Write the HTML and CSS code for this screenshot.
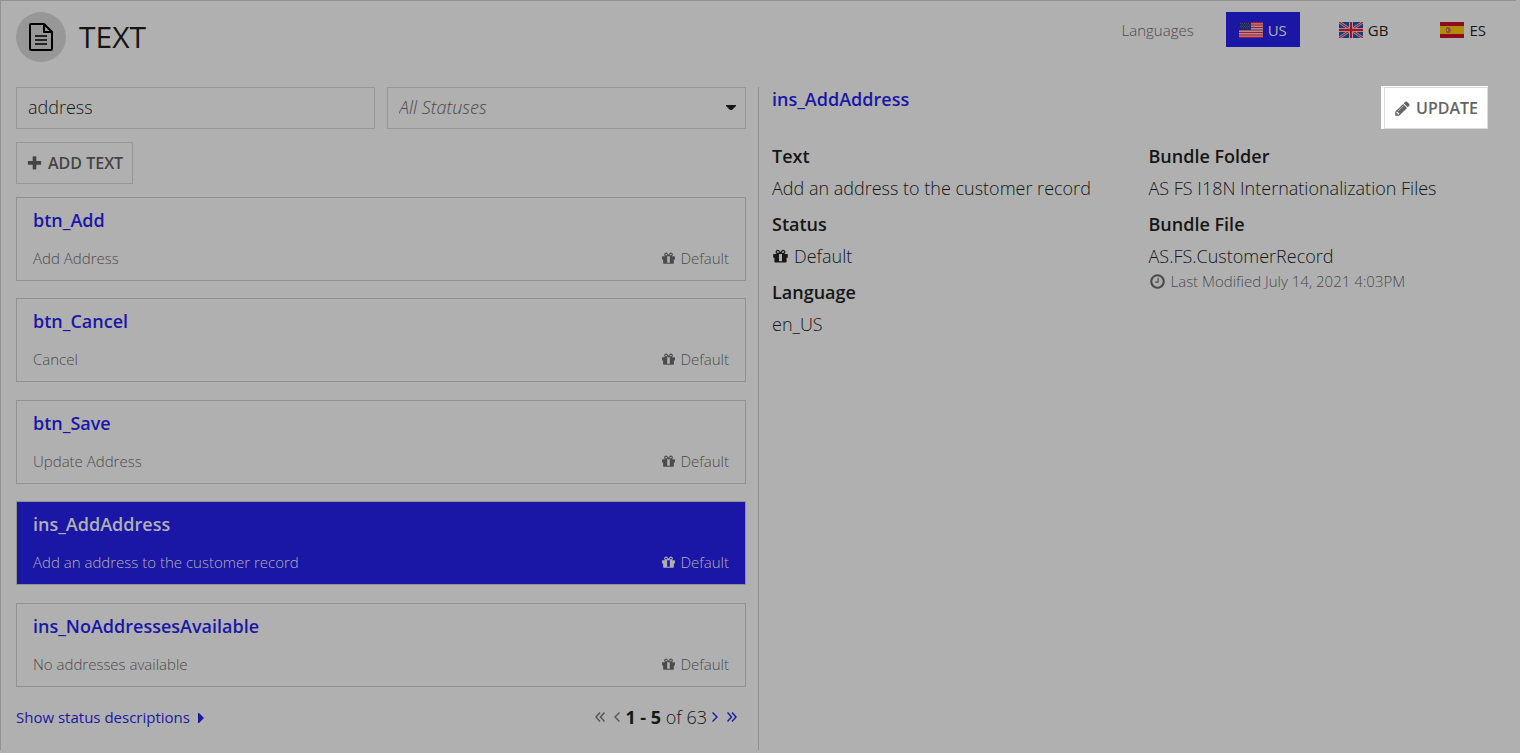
FILE: index.html
```html
<!DOCTYPE html>
<html lang="en">
<head>
<meta charset="utf-8">
<title>Text</title>
<link rel="stylesheet" href="styles.css">
</head>
<body>
<svg class="sprite" aria-hidden="true">
  <symbol id="gift" viewBox="0 0 1792 1792"><path d="M1056 1356v-716h-320v716q0 25 18 38.500t46 13.500h192q28 0 46-13.500t18-38.500zm-456-844h195l-126-161q-26-31-69-31-40 0-68 28t-28 68 28 68 68 28zm688-96q0-40-28-68t-68-28q-43 0-69 31l-125 161h194q40 0 68-28t28-68zm376 256v320q0 14-9 23t-23 9h-96v416q0 40-28 68t-68 28h-1088q-40 0-68-28t-28-68v-416h-96q-14 0-23-9t-9-23v-320q0-14 9-23t23-9h440q-93 0-158.500-65.500t-65.500-158.500 65.500-158.500 158.500-65.500q107 0 168 77l128 165 128-165q61-77 168-77 93 0 158.500 65.500t65.500 158.500-65.500 158.500-158.500 65.500h440q14 0 23 9t9 23z"/></symbol>
</svg>
<div class="page">
  <header class="header">
    <span class="badge">
      <svg width="24" height="28" viewBox="0 0 24 28" fill="none" stroke="#000" stroke-width="2" stroke-linejoin="round"><path d="M15 1H2Q1 1 1 2v24q0 1 1 1h20q1 0 1-1V9z"/><path d="M15 1v8h8"/><path d="M6 13h12M6 17h12M6 21h12" stroke-width="1.600"/></svg>
    </span>
    <h1 class="title">TEXT</h1>
    <nav class="languages" aria-label="Languages">
      <span class="languages-label">Languages</span>
      <button class="lang lang-active" type="button">
        <svg width="24" height="16" viewBox="0 0 24 16"><path fill="#aa8b9d" d="M0 0h24v16H0z"/><path stroke="#aa1828" stroke-width="1.200" d="M0 .6h24M0 3h24M0 5.500h24M0 8h24M0 10.500h24M0 13h24M0 15.400h24"/><path fill="#20245f" d="M0 0h12v8H0z"/><path stroke="#55598a" stroke-width=".7" stroke-dasharray="1 1" d="M1 1.500h10M2 3h9M1 4.500h10M2 6h9"/></svg>
        US
      </button>
      <button class="lang" type="button">
        <svg width="24" height="16" viewBox="0 0 24 16"><path fill="#173c7a" d="M0 0h24v16H0z"/><path stroke="#b0b0b0" stroke-width="2.600" d="M0 0l24 16M24 0L0 16"/><path stroke="#a01525" stroke-width="1.200" d="M0 0l24 16M24 0L0 16"/><path stroke="#b0b0b0" stroke-width="4" d="M12 0v16M0 8h24"/><path stroke="#a51225" stroke-width="2.400" d="M12 0v16M0 8h24"/></svg>
        GB
      </button>
      <button class="lang" type="button">
        <svg width="24" height="16" viewBox="0 0 24 16"><path fill="#8d0c1c" d="M0 0h24v16H0z"/><path fill="#b28b08" d="M0 4h24v8H0z"/><path fill="#875044" d="M6 6l2-1 2 1 1 2-1 3H7L6 9z"/><path fill="#a98374" d="M7 7h1v2H7z"/></svg>
        ES
      </button>
    </nav>
  </header>

  <div class="columns">
    <section class="list-pane">
      <div class="filters">
        <input class="search" type="text" value="address" aria-label="Search text">
        <div class="select-wrap">
          <select class="status-select" aria-label="Status"><option>All Statuses</option></select>
          <svg class="caret" width="10" height="6" viewBox="0 0 10 6"><path fill="#161616" d="M0 0h10v1L6 5H4L0 1z"/></svg>
        </div>
      </div>
      <button class="action" type="button">
        <svg width="17" height="17" viewBox="0 0 1792 1792"><path fill="currentColor" d="M1600 736v192q0 40-28 68t-68 28h-416v416q0 40-28 68t-68 28h-192q-40 0-68-28t-28-68v-416h-416q-40 0-68-28t-28-68v-192q0-40 28-68t68-28h416v-416q0-40 28-68t68-28h192q40 0 68 28t28 68v416h416q40 0 68 28t28 68z"/></svg>
        ADD TEXT
      </button>
      <ul class="cards">
        <li class="card"><a class="card-name" href="#">btn_Add</a><div class="card-row"><span>Add Address</span><span class="status"><svg class="icon"><use href="#gift"/></svg>Default</span></div></li>
        <li class="card"><a class="card-name" href="#">btn_Cancel</a><div class="card-row"><span>Cancel</span><span class="status"><svg class="icon"><use href="#gift"/></svg>Default</span></div></li>
        <li class="card"><a class="card-name" href="#">btn_Save</a><div class="card-row"><span>Update Address</span><span class="status"><svg class="icon"><use href="#gift"/></svg>Default</span></div></li>
        <li class="card card-selected"><a class="card-name" href="#">ins_AddAddress</a><div class="card-row"><span>Add an address to the customer record</span><span class="status"><svg class="icon"><use href="#gift"/></svg>Default</span></div></li>
        <li class="card"><a class="card-name" href="#">ins_NoAddressesAvailable</a><div class="card-row"><span>No addresses available</span><span class="status"><svg class="icon"><use href="#gift"/></svg>Default</span></div></li>
      </ul>
      <footer class="list-footer">
        <a class="descriptions" href="#">Show status descriptions <svg width="6" height="10" viewBox="0 0 6 10"><path fill="currentColor" d="M0 0h1l5 5-5 5H0z"/></svg></a>
        <div class="pager">
          <button class="page-btn" type="button" aria-label="First page" disabled><svg width="10" height="10" viewBox="0 0 10 10"><path d="M5 .5L1 5l4 4.500M9.500 .5l-4 4.500 4 4.500"/></svg></button>
          <button class="page-btn" type="button" aria-label="Previous page" disabled><svg width="6" height="10" viewBox="0 0 6 10"><path d="M5.500 .5L1 5l4.500 4.500"/></svg></button>
          <span><b>1 - 5</b> of 63</span>
          <button class="page-btn" type="button" aria-label="Next page"><svg width="6" height="10" viewBox="0 0 6 10"><path d="M.5 .5L5 5 .5 9.500"/></svg></button>
          <button class="page-btn page-last" type="button" aria-label="Last page"><svg width="10" height="10" viewBox="0 0 10 10"><path d="M.5 .5l4 4.500-4 4.500M5 .5L9 5 5 9.500"/></svg></button>
        </div>
      </footer>
    </section>

    <section class="detail-pane">
      <div class="detail-head">
        <h2 class="detail-title">ins_AddAddress</h2>
        <div class="spotlight">
          <button class="action action-update" type="button">
            <svg width="17" height="17" viewBox="0 0 1792 1792"><path fill="currentColor" d="M491 1536l91-91-235-235-91 91v107h128v128h107zm523-928q0-22-22-22-10 0-17 7l-542 542q-7 7-7 17 0 22 22 22 10 0 17-7l542-542q7-7 7-17zm-54-192l416 416-832 832h-416v-416zm683 96q0 53-37 90l-166 166-416-416 166-165q36-38 90-38 53 0 91 38l235 234q37 39 37 91z"/></svg>
            UPDATE
          </button>
        </div>
      </div>
      <div class="detail-grid">
        <dl class="fields">
          <dt>Text</dt><dd>Add an address to the customer record</dd>
          <dt>Status</dt><dd><svg class="icon icon-large"><use href="#gift"/></svg>Default</dd>
          <dt>Language</dt><dd>en_US</dd>
        </dl>
        <dl class="fields">
          <dt>Bundle Folder</dt><dd>AS FS I18N Internationalization Files</dd>
          <dt>Bundle File</dt><dd class="file">AS.FS.CustomerRecord</dd>
          <dd class="modified"><svg class="icon icon-large" viewBox="0 0 1792 1792"><path d="M1024 544v448q0 14-9 23t-23 9h-320q-14 0-23-9t-9-23v-64q0-14 9-23t23-9h224v-352q0-14 9-23t23-9h64q14 0 23 9t9 23zm416 352q0-148-73-273t-198-198-273-73-273 73-198 198-73 273 73 273 198 198 273 73 273-73 198-198 73-273zm224 0q0 209-103 385.500t-279.500 279.500-385.500 103-385.500-103-279.500-279.500-103-385.500 103-385.500 279.500-279.500 385.500-103 385.500 103 279.500 279.500 103 385.500z"/></svg>Last Modified July 14, 2021 4:03PM</dd>
        </dl>
      </div>
    </section>
  </div>
</div>
</body>
</html>
```

FILE: styles.css
```css
:root {
  --bg: #b0b0b0;
  --line: #919191;
  --ink: #161616;
  --muted: #4b4b4b;
  --blue: #1a17a6;
}

* { box-sizing: border-box; }

body {
  margin: 0;
  background: var(--bg);
  color: var(--ink);
  font: 300 18px/24px "Open Sans", sans-serif;
}

button, input, select { font: inherit; color: inherit; border-radius: 0; }
button { cursor: pointer; }
a { color: var(--blue); text-decoration: none; }
svg { flex: none; }

.sprite { position: absolute; width: 0; height: 0; }

.page {
  margin-right: 4px;
  border: solid var(--line);
  border-width: 1px 0 0 1px;
}

.header {
  display: flex;
  align-items: flex-start;
  padding: 11px 17px 0 15px;
}

.badge {
  display: flex;
  align-items: center;
  justify-content: center;
  width: 50px;
  height: 50px;
  border-radius: 50%;
  background: #979797;
}

.title {
  margin: 0 0 0 13px;
  font-size: 30px;
  font-weight: 400;
  line-height: 50px;
}

.languages {
  display: flex;
  align-items: center;
  gap: 26px;
  margin-left: auto;
  font-size: 15px;
}

.languages-label { color: var(--muted); margin-right: 6px; }

.lang {
  display: flex;
  align-items: center;
  gap: 5px;
  height: 35px;
  padding: 0 13px;
  border: 0;
  background: none;
  font-weight: 400;
}

.lang-active { background: var(--blue); color: var(--bg); }

.columns {
  display: grid;
  grid-template-columns: 757px 1fr;
  margin-top: 25px;
}

.list-pane { padding: 0 12px 20px 15px; }

.filters {
  display: grid;
  grid-template-columns: 1fr 1fr;
  gap: 12px;
  margin-bottom: 13px;
}

.search, .status-select {
  width: 100%;
  height: 42px;
  padding: 0 11px 2px;
  border: 1px solid #979797;
  background: none;
}

.select-wrap { position: relative; }

.status-select {
  display: block;
  appearance: none;
  color: var(--muted);
  font-style: italic;
}

.caret {
  position: absolute;
  right: 10px;
  top: 18px;
  pointer-events: none;
}

.action {
  display: flex;
  align-items: center;
  gap: 5px;
  height: 42px;
  padding: 0 9px;
  border: 1px solid #979797;
  background: none;
  color: #444;
  font-size: 16px;
  font-weight: 600;
}

.cards {
  margin: 13px 0 0;
  padding: 0;
  list-style: none;
}

.card {
  height: 84px;
  margin-bottom: 17px;
  padding: 10px 16px;
  border: 1px solid var(--line);
}

.card:nth-child(even) { margin-bottom: 18px; }

.card-name {
  display: block;
  margin-bottom: 14px;
  font-weight: 600;
}

.card-row {
  display: flex;
  justify-content: space-between;
  color: var(--muted);
  font-size: 15px;
}

.status { display: flex; align-items: center; gap: 4px; }

.icon { width: 15px; height: 15px; fill: currentColor; }
.icon-large { width: 17px; height: 17px; }

.card-selected { background: var(--blue); }
.card-selected .card-name, .card-selected .card-row { color: var(--bg); }

.list-footer {
  display: flex;
  align-items: center;
  justify-content: space-between;
  padding-right: 9px;
  line-height: 26px;
}

.descriptions { font-size: 15px; font-weight: 400; }
.descriptions svg { margin-left: 4px; }

.pager { display: flex; align-items: center; gap: 5px; }
.pager b { font-weight: 700; }

.page-btn {
  display: flex;
  padding: 0;
  border: 0;
  background: none;
  color: var(--blue);
}

.page-btn:disabled { color: #555; }
.page-btn:first-child { margin-right: 4px; }
.page-last { margin-left: 4px; }
.page-btn svg { fill: none; stroke: currentColor; stroke-width: 1.4; }

.detail-pane {
  padding-left: 13px;
  border-left: 1px solid var(--line);
}

.detail-head {
  display: flex;
  align-items: flex-start;
  justify-content: space-between;
  padding-right: 28px;
}

.detail-title {
  margin: 0;
  color: var(--blue);
  font-size: 18px;
  font-weight: 600;
}

.spotlight {
  margin-top: -1px;
  padding: 1px 0 0 3px;
  background: #fff;
}

.action-update {
  border-color: #dcdcdc;
  color: #646464;
}

.detail-grid {
  display: grid;
  grid-template-columns: 1fr 1fr;
  margin-top: 13px;
  margin-right: -9px;
}

.fields { margin: 0; line-height: 28px; }
.fields dt { margin-bottom: 4px; font-weight: 600; }
.fields dd {
  display: flex;
  align-items: center;
  gap: 5px;
  margin: 0 0 8px;
}

.fields .file { margin-bottom: 0; }
.fields .modified { color: var(--muted); font-size: 15px; line-height: 22px; }
```
